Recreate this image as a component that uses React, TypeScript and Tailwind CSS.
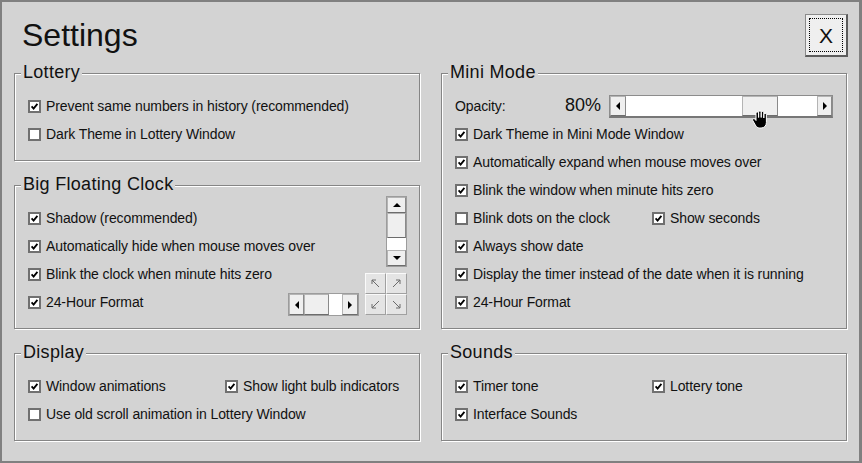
import React from "react";

function Check({ checked }: { checked: boolean }) {
  return (
    <span className="flex h-[13px] w-[13px] shrink-0 items-center justify-center border-2 border-[#707070] bg-white">
      {checked && (
        <svg width="9" height="9" viewBox="0 0 9 9">
          <path d="M1.6 4.4 L3.6 6.6 L7.4 1.9" fill="none" stroke="#000" strokeWidth="1.8" />
        </svg>
      )}
    </span>
  );
}

function Option({ label, checked = true, className = "" }: { label: string; checked?: boolean; className?: string }) {
  return (
    <div className={`flex h-[28px] items-center gap-[5px] ${className}`}>
      <Check checked={checked} />
      <span className="whitespace-nowrap leading-none">{label}</span>
    </div>
  );
}

function Group({
  title,
  className = "",
  bodyClass = "pl-[13px] pt-[10px]",
  children,
}: {
  title: string;
  className?: string;
  bodyClass?: string;
  children: React.ReactNode;
}) {
  return (
    <div className={`flex flex-col border border-[#858585] shadow-[inset_1px_1px_0_#fff,1px_1px_0_#fff] ${className}`}>
      <div className="-mt-[12px] ml-[6px] h-[20px] w-fit bg-[#d3d3d3] px-[2px] text-[18px] leading-[20px] tracking-[0.3px] text-[#111]">
        {title}
      </div>
      <div className={bodyClass}>{children}</div>
    </div>
  );
}

function Tri({ dir }: { dir: "up" | "down" | "left" | "right" }) {
  const pts = {
    up: "0,5 4,1 8,5",
    down: "0,1 8,1 4,5",
    left: "5,0 5,8 1,4",
    right: "1,0 1,8 5,4",
  }[dir];
  const vertical = dir === "up" || dir === "down";
  return (
    <svg width={vertical ? 8 : 6} height={vertical ? 6 : 8} viewBox={vertical ? "0 0 8 6" : "0 0 6 8"}>
      <polygon points={pts} fill="#000" />
    </svg>
  );
}

function Btn({ className = "", children }: { className?: string; children?: React.ReactNode }) {
  return (
    <div
      className={`flex shrink-0 items-center justify-center border border-[#b4b4b4] border-b-[#6c6c6c] border-r-[#8a8a8a] bg-[#efefef] ${className}`}
    >
      {children}
    </div>
  );
}

function PadBtn({ rot }: { rot: number }) {
  return (
    <div className="flex items-center justify-center border border-[#fafafa] border-b-[#a0a0a0] border-r-[#a0a0a0] bg-[#e4e4e4]">
      <svg width="11" height="11" viewBox="0 0 11 11" style={{ transform: `rotate(${rot}deg)` }}>
        <path d="M2 2 L9 9 M2 2 L2 6 M2 2 L6 2" fill="none" stroke="#6a6a6a" strokeWidth="1" />
      </svg>
    </div>
  );
}

function Hand() {
  return (
    <svg width="19" height="20" viewBox="0 0 19 20">
      <path
        d="M5 8 V3.2 a1.3 1.3 0 0 1 2.6 0 V7.5 V2.2 a1.3 1.3 0 0 1 2.6 0 V7.5 V2.8 a1.3 1.3 0 0 1 2.6 0 V8 V4.6 a1.3 1.3 0 0 1 2.6 0 V12.5 c0 3.2 -2.2 5.5 -5.3 5.5 h-1.4 c-2.2 0 -3.4 -1.2 -4.4 -3 L1.8 10.6 a1.3 1.3 0 0 1 2.2 -1.4 L5 10.5 Z"
        fill="#000"
        stroke="#fff"
        strokeWidth="1"
      />
    </svg>
  );
}

export default function App() {
  return (
    <div className="flex h-[463px] w-[862px] flex-col border-b-2 border-l-2 border-r-[3px] border-t-2 border-[#808080] bg-[#d3d3d3] px-[12px] font-['Liberation_Sans',Arial,sans-serif] text-[14px] tracking-[-0.1px] text-[#111]">
      {/* header */}
      <div className="flex h-[71px] shrink-0 items-start justify-between">
        <h1 className="ml-[8px] mt-[17px] text-[32px] font-normal leading-none tracking-normal">Settings</h1>
        <div className="-mr-[1px] mt-[12px] flex h-[43px] w-[43px] border border-[#8a8a8a] border-b-2 border-r-2 border-b-[#5c5c5c] border-r-[#5c5c5c] bg-[#efefef] p-[3px]">
          <div className="flex flex-1 items-center justify-center border border-dotted border-black text-[21px] leading-none">
            X
          </div>
        </div>
      </div>

      <div className="grid grid-cols-[406px_406px] gap-x-[21px]">
        {/* left column */}
        <div className="flex flex-col gap-[24px]">
          <Group title="Lottery" className="h-[88px]">
            <Option label="Prevent same numbers in history (recommended)" />
            <Option label="Dark Theme in Lottery Window" checked={false} />
          </Group>

          <Group title="Big Floating Clock" className="h-[144px]" bodyClass="flex gap-[6px] pl-[13px] pr-[12px]">
            <div className="flex-1 pt-[10px]">
              <Option label="Shadow (recommended)" />
              <Option label="Automatically hide when mouse moves over" />
              <Option label="Blink the clock when minute hits zero" />
              <div className="flex items-center justify-between">
                <Option label="24-Hour Format" />
                <div className="mt-[5px] flex h-[23px] w-[71px] border border-[#9c9c9c] bg-white">
                  <Btn className="w-[15px]">
                    <Tri dir="left" />
                  </Btn>
                  <Btn className="w-[25px]" />
                  <div className="flex-1" />
                  <Btn className="w-[16px]">
                    <Tri dir="right" />
                  </Btn>
                </div>
              </div>
            </div>
            <div className="mt-[2px] flex w-[42px] flex-col items-end gap-[6px]">
              <div className="flex h-[71px] w-[21px] flex-col border border-[#9c9c9c] bg-white">
                <Btn className="h-[16px]">
                  <Tri dir="up" />
                </Btn>
                <Btn className="h-[25px]" />
                <div className="flex-1" />
                <Btn className="h-[16px]">
                  <Tri dir="down" />
                </Btn>
              </div>
              <div className="grid h-[42px] w-[42px] grid-cols-2 grid-rows-2">
                <PadBtn rot={0} />
                <PadBtn rot={90} />
                <PadBtn rot={270} />
                <PadBtn rot={180} />
              </div>
            </div>
          </Group>

          <Group title="Display" className="h-[88px]">
            <div className="flex">
              <Option label="Window animations" className="w-[197px]" />
              <Option label="Show light bulb indicators" />
            </div>
            <Option label="Use old scroll animation in Lottery Window" checked={false} />
          </Group>
        </div>

        {/* right column */}
        <div className="flex flex-col gap-[24px]">
          <Group title="Mini Mode" className="h-[256px]">
            <div className="flex h-[28px] items-center">
              <span className="w-[100px] leading-none">Opacity:</span>
              <span className="-mt-[3px] w-[46px] text-right text-[18px] leading-none tracking-normal">80%</span>
              <div className="relative ml-[8px] flex h-[23px] w-[224px] border border-[#8c8c8c] border-b-2 border-b-[#777] bg-white">
                <Btn className="w-[16px]">
                  <Tri dir="left" />
                </Btn>
                <div className="w-[116px]" />
                <Btn className="w-[36px]" />
                <div className="flex-1" />
                <Btn className="w-[15px]">
                  <Tri dir="right" />
                </Btn>
                <div className="absolute left-[141px] top-[14px]">
                  <Hand />
                </div>
              </div>
            </div>
            <Option label="Dark Theme in Mini Mode Window" />
            <Option label="Automatically expand when mouse moves over" />
            <Option label="Blink the window when minute hits zero" />
            <div className="flex">
              <Option label="Blink dots on the clock" checked={false} className="w-[197px]" />
              <Option label="Show seconds" />
            </div>
            <Option label="Always show date" />
            <Option label="Display the timer instead of the date when it is running" />
            <Option label="24-Hour Format" />
          </Group>

          <Group title="Sounds" className="h-[88px]">
            <div className="flex">
              <Option label="Timer tone" className="w-[197px]" />
              <Option label="Lottery tone" />
            </div>
            <Option label="Interface Sounds" />
          </Group>
        </div>
      </div>
    </div>
  );
}
